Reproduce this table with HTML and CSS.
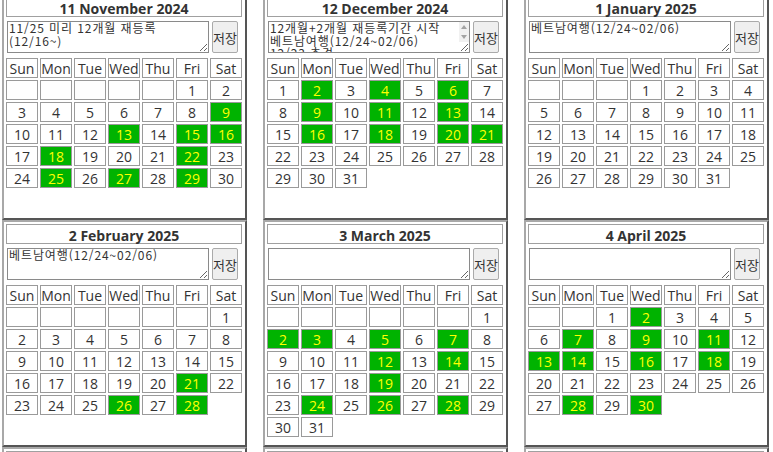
FILE: index.html
```html
<!DOCTYPE html>
<html lang="ko">
<head>
<meta charset="utf-8">
<title>Calendar</title>
<link rel="stylesheet" href="styles.css">
</head>
<body>
<div class="months">

  <section class="month">
    <div class="title">11 November 2024</div>
    <div class="note"><div class="memo-box"><textarea class="memo">11/25 미리 12개월 재등록
(12/16~)</textarea></div><button class="save">저장</button></div>
    <div class="cal">
      <span class="h">Sun</span><span class="h">Mon</span><span class="h">Tue</span><span class="h">Wed</span><span class="h">Thu</span><span class="h">Fri</span><span class="h">Sat</span>
      <span class="d"></span><span class="d"></span><span class="d"></span><span class="d"></span><span class="d"></span><span class="d">1</span><span class="d">2</span>
      <span class="d">3</span><span class="d">4</span><span class="d">5</span><span class="d">6</span><span class="d">7</span><span class="d">8</span><span class="d g">9</span>
      <span class="d">10</span><span class="d">11</span><span class="d">12</span><span class="d g">13</span><span class="d">14</span><span class="d g">15</span><span class="d g">16</span>
      <span class="d">17</span><span class="d g">18</span><span class="d">19</span><span class="d">20</span><span class="d">21</span><span class="d g">22</span><span class="d">23</span>
      <span class="d">24</span><span class="d g">25</span><span class="d">26</span><span class="d g">27</span><span class="d">28</span><span class="d g">29</span><span class="d">30</span>
    </div>
  </section>

  <section class="month">
    <div class="title">12 December 2024</div>
    <div class="note"><div class="memo-box"><textarea class="memo scroll">12개월+2개월 재등록기간 시작
베트남여행(12/24~02/06)
12/23 추경</textarea><span class="vbar" aria-hidden="true"><span class="arr up"></span><span class="arr down"></span></span></div><button class="save">저장</button></div>
    <div class="cal">
      <span class="h">Sun</span><span class="h">Mon</span><span class="h">Tue</span><span class="h">Wed</span><span class="h">Thu</span><span class="h">Fri</span><span class="h">Sat</span>
      <span class="d">1</span><span class="d g">2</span><span class="d">3</span><span class="d g">4</span><span class="d">5</span><span class="d g">6</span><span class="d">7</span>
      <span class="d">8</span><span class="d g">9</span><span class="d">10</span><span class="d g">11</span><span class="d">12</span><span class="d g">13</span><span class="d">14</span>
      <span class="d">15</span><span class="d g">16</span><span class="d">17</span><span class="d g">18</span><span class="d">19</span><span class="d g">20</span><span class="d g">21</span>
      <span class="d">22</span><span class="d">23</span><span class="d">24</span><span class="d">25</span><span class="d">26</span><span class="d">27</span><span class="d">28</span>
      <span class="d">29</span><span class="d">30</span><span class="d">31</span>
    </div>
  </section>

  <section class="month">
    <div class="title">1 January 2025</div>
    <div class="note"><div class="memo-box"><textarea class="memo">베트남여행(12/24~02/06)</textarea></div><button class="save">저장</button></div>
    <div class="cal">
      <span class="h">Sun</span><span class="h">Mon</span><span class="h">Tue</span><span class="h">Wed</span><span class="h">Thu</span><span class="h">Fri</span><span class="h">Sat</span>
      <span class="d"></span><span class="d"></span><span class="d"></span><span class="d">1</span><span class="d">2</span><span class="d">3</span><span class="d">4</span>
      <span class="d">5</span><span class="d">6</span><span class="d">7</span><span class="d">8</span><span class="d">9</span><span class="d">10</span><span class="d">11</span>
      <span class="d">12</span><span class="d">13</span><span class="d">14</span><span class="d">15</span><span class="d">16</span><span class="d">17</span><span class="d">18</span>
      <span class="d">19</span><span class="d">20</span><span class="d">21</span><span class="d">22</span><span class="d">23</span><span class="d">24</span><span class="d">25</span>
      <span class="d">26</span><span class="d">27</span><span class="d">28</span><span class="d">29</span><span class="d">30</span><span class="d">31</span>
    </div>
  </section>

  <section class="month">
    <div class="title">2 February 2025</div>
    <div class="note"><div class="memo-box"><textarea class="memo">베트남여행(12/24~02/06)</textarea></div><button class="save">저장</button></div>
    <div class="cal">
      <span class="h">Sun</span><span class="h">Mon</span><span class="h">Tue</span><span class="h">Wed</span><span class="h">Thu</span><span class="h">Fri</span><span class="h">Sat</span>
      <span class="d"></span><span class="d"></span><span class="d"></span><span class="d"></span><span class="d"></span><span class="d"></span><span class="d">1</span>
      <span class="d">2</span><span class="d">3</span><span class="d">4</span><span class="d">5</span><span class="d">6</span><span class="d">7</span><span class="d">8</span>
      <span class="d">9</span><span class="d">10</span><span class="d">11</span><span class="d">12</span><span class="d">13</span><span class="d">14</span><span class="d">15</span>
      <span class="d">16</span><span class="d">17</span><span class="d">18</span><span class="d">19</span><span class="d">20</span><span class="d g">21</span><span class="d">22</span>
      <span class="d">23</span><span class="d">24</span><span class="d">25</span><span class="d g">26</span><span class="d">27</span><span class="d g">28</span>
    </div>
  </section>

  <section class="month">
    <div class="title">3 March 2025</div>
    <div class="note"><div class="memo-box"><textarea class="memo"></textarea></div><button class="save">저장</button></div>
    <div class="cal">
      <span class="h">Sun</span><span class="h">Mon</span><span class="h">Tue</span><span class="h">Wed</span><span class="h">Thu</span><span class="h">Fri</span><span class="h">Sat</span>
      <span class="d"></span><span class="d"></span><span class="d"></span><span class="d"></span><span class="d"></span><span class="d"></span><span class="d">1</span>
      <span class="d g">2</span><span class="d g">3</span><span class="d">4</span><span class="d g">5</span><span class="d">6</span><span class="d g">7</span><span class="d">8</span>
      <span class="d">9</span><span class="d">10</span><span class="d">11</span><span class="d g">12</span><span class="d">13</span><span class="d g">14</span><span class="d">15</span>
      <span class="d">16</span><span class="d">17</span><span class="d">18</span><span class="d g">19</span><span class="d">20</span><span class="d">21</span><span class="d">22</span>
      <span class="d">23</span><span class="d g">24</span><span class="d">25</span><span class="d g">26</span><span class="d">27</span><span class="d g">28</span><span class="d">29</span>
      <span class="d">30</span><span class="d">31</span>
    </div>
  </section>

  <section class="month">
    <div class="title">4 April 2025</div>
    <div class="note"><div class="memo-box"><textarea class="memo"></textarea></div><button class="save">저장</button></div>
    <div class="cal">
      <span class="h">Sun</span><span class="h">Mon</span><span class="h">Tue</span><span class="h">Wed</span><span class="h">Thu</span><span class="h">Fri</span><span class="h">Sat</span>
      <span class="d"></span><span class="d"></span><span class="d">1</span><span class="d g">2</span><span class="d">3</span><span class="d">4</span><span class="d">5</span>
      <span class="d">6</span><span class="d g">7</span><span class="d">8</span><span class="d g">9</span><span class="d">10</span><span class="d g">11</span><span class="d">12</span>
      <span class="d g">13</span><span class="d g">14</span><span class="d">15</span><span class="d g">16</span><span class="d">17</span><span class="d g">18</span><span class="d">19</span>
      <span class="d">20</span><span class="d">21</span><span class="d">22</span><span class="d">23</span><span class="d">24</span><span class="d">25</span><span class="d">26</span>
      <span class="d">27</span><span class="d g">28</span><span class="d">29</span><span class="d g">30</span>
    </div>
  </section>

  <section class="month">
    <div class="title"></div>
  </section>

  <section class="month">
    <div class="title"></div>
  </section>

  <section class="month">
    <div class="title"></div>
  </section>

</div>
</body>
</html>
```

FILE: styles.css
```css
html, body {
  margin: 0;
  padding: 0;
  overflow: hidden;
  background: #ffffff;
}

body {
  font-family: "Open Sans", "Noto Sans", "Noto Sans CJK KR", sans-serif;
  color: #333333;
}

.months {
  display: grid;
  grid-template-columns: repeat(3, 245px);
  column-gap: 16px;
  row-gap: 0;
  margin: -7px 0 0 2px;
}

.month {
  display: flex;
  flex-direction: column;
  gap: 4px;
  box-sizing: border-box;
  height: 227px;
  padding: 2px 3px 8px 2px;
  border: 2px solid;
  border-color: #a8a8a8 #555555 #555555 #a8a8a8;
  background: #ffffff;
}

.title {
  box-sizing: border-box;
  height: 20px;
  flex: none;
  padding-top: 3px;
  border: 1px solid #a0a0a0;
  text-align: center;
  font-weight: 700;
  font-size: 14px;
  line-height: 15px;
  color: #333333;
}

.note {
  display: flex;
  gap: 3px;
  height: 32px;
  padding: 0 4px 0 1px;
}

.memo-box {
  position: relative;
  width: 202px;
  height: 32px;
}

.memo {
  display: block;
  box-sizing: border-box;
  width: 202px;
  height: 32px;
  margin: 0;
  padding: 0 1px;
  border: 1px solid #8a8a8a;
  font-family: "Noto Sans CJK KR", sans-serif;
  font-size: 12px;
  letter-spacing: 0.9px;
  line-height: 12.5px;
  color: #333333;
  resize: both;
}

.memo.scroll {
  overflow-y: hidden;
  padding-right: 11px;
}

.vbar {
  position: absolute;
  top: 1px;
  right: 1px;
  bottom: 11px;
  width: 10px;
  display: flex;
  flex-direction: column;
  justify-content: space-between;
  align-items: center;
  padding: 3px 0;
  box-sizing: border-box;
  background: #f1f1f1;
}

.arr {
  width: 0;
  height: 0;
  border-left: 3px solid transparent;
  border-right: 3px solid transparent;
}

.arr.up {
  border-bottom: 4px solid #a3a3a3;
}

.arr.down {
  border-top: 4px solid #a3a3a3;
}

.save {
  box-sizing: border-box;
  width: 26px;
  height: 32px;
  margin: 0;
  padding: 0;
  border: 1px solid #aaaaaa;
  border-radius: 2px;
  background: #efefef;
  font-family: "Noto Sans CJK KR", sans-serif;
  font-size: 13px;
  color: #333333;
}

.cal {
  display: grid;
  grid-template-columns: repeat(7, 32px);
  grid-template-rows: repeat(7, 20px);
  gap: 2px;
  margin-top: 1px;
}

.h, .d {
  box-sizing: border-box;
  border: 1px solid #9a9a9a;
  text-align: center;
  font-size: 14px;
  line-height: 19px;
  color: #333333;
  background: #ffffff;
}

.d.g {
  background: #00b300;
  color: #ffff00;
}
```
